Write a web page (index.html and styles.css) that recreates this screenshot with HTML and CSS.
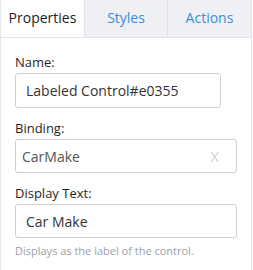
FILE: index.html
```html
<!DOCTYPE html>
<html lang="en">
<head>
    <meta charset="UTF-8">
    <title>Control Properties</title>
    <link rel="stylesheet" href="styles.css">
</head>
<body>
    <div class="panel">
        <div class="tabs">
            <div class="tab active">Properties</div>
            <div class="tab">Styles</div>
            <div class="tab">Actions</div>
        </div>
        <div class="body">
            <div class="field">
                <label>Name:</label>
                <div class="input short">Labeled Control#e0355</div>
            </div>
            <div class="field">
                <label>Binding:</label>
                <div class="input binding">
                    <span>CarMake</span>
                    <span class="clear">X</span>
                </div>
            </div>
            <div class="field">
                <label>Display Text:</label>
                <div class="input">Car Make</div>
                <p class="hint">Displays as the label of the control.</p>
            </div>
        </div>
    </div>
</body>
</html>
```

FILE: styles.css
```css
* {
    margin: 0;
    padding: 0;
    box-sizing: border-box;
}
body {
    font-family: 'Open Sans', sans-serif;
    background: #ffffff;
}
.panel {
    width: 252px;
    height: 270px;
    border-left: 1px solid #e4e6ea;
    border-right: 1px solid #e4e6ea;
}
.tabs {
    display: grid;
    grid-template-columns: 83px 83px 1fr;
    height: 38px;
    border-bottom: 1px solid #e1e3e7;
}
.tab {
    display: flex;
    align-items: center;
    justify-content: center;
    font-size: 14px;
    color: #3a8ee0;
    background-color: #eef0f4;
    border-left: 1px solid #e1e3e7;
    padding-bottom: 2px;
}
.tab.active {
    background-color: #ffffff;
    color: #222;
    border-left: none;
}
.body {
    padding: 15px 14px 0 14px;
}
.field {
    margin-bottom: 11px;
}
label {
    display: block;
    font-size: 13px;
    color: #1f1f1f;
    line-height: 18px;
    margin-bottom: 2px;
}
.input {
    height: 34px;
    border: 1px solid #ccd0d6;
    border-radius: 3px;
    padding: 0 10px;
    font-size: 14px;
    color: #333;
    display: flex;
    align-items: center;
}
.input.short {
    width: 206px;
    height: 35px;
    margin-bottom: 1px;
}
.input.binding {
    justify-content: space-between;
    padding: 0 17px 0 6px;
    color: #555;
}
.clear {
    color: #cfd2d6;
    font-size: 15px;
}
.hint {
    margin-top: 5px;
    font-size: 11px;
    color: #9ba2ab;
}
```
